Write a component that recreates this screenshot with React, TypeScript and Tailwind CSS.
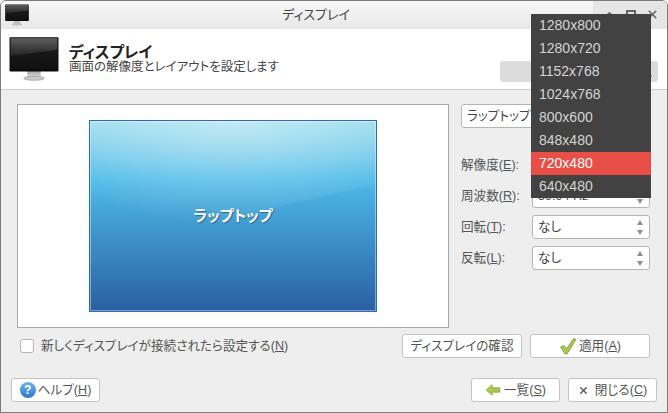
import React from 'react'
import { X, ChevronUp, ChevronRight } from 'lucide-react'

const FONT = "font-['Liberation_Sans','Noto_Sans_CJK_JP',sans-serif] [font-feature-settings:'palt']"

const MODES = ['1280x800', '1280x720', '1152x768', '1024x768', '800x600', '848x480', '720x480', '640x480']

function Monitor({ id, className }: { id: string; className: string }) {
  return (
    <svg viewBox="0 0 48 48" className={className}>
      <defs>
        <linearGradient id={id} x1="0" y1="0" x2="0" y2="1">
          <stop offset="0" stopColor="#5e5e5e" />
          <stop offset="0.5" stopColor="#2a2a2a" />
          <stop offset="1" stopColor="#0c0c0c" />
        </linearGradient>
        <linearGradient id={`${id}-s`} x1="0" y1="0" x2="0" y2="1">
          <stop offset="0" stopColor="#8d8d8d" />
          <stop offset="1" stopColor="#e4e4e4" />
        </linearGradient>
      </defs>
      <rect x="17.5" y="33" width="13" height="9" fill={`url(#${id}-s)`} />
      <ellipse cx="24" cy="42.5" rx="10" ry="2" fill="#c9c9c9" stroke="#8c8c8c" strokeWidth="0.5" />
      <rect x="0.5" y="3" width="47" height="33" rx="1" fill="#0a0a0a" />
      <rect x="1.5" y="4" width="45" height="30" fill={`url(#${id})`} />
      <path d="M1.5 21 L46.5 15 V34 H1.5 Z" fill="#111" opacity="0.75" />
    </svg>
  )
}

function Mnemonic({ before, k }: { before: string; k: string }) {
  return (
    <>
      {before}(<span className="underline">{k}</span>)
    </>
  )
}

function Spin({ value }: { value: string }) {
  return (
    <div className="flex h-[24px] w-[118px] items-center justify-between rounded-[3px] border border-[#b4b4b4] bg-white pl-[5px] pr-[6px] text-[#444]">
      <span>{value}</span>
      <div className="flex flex-col gap-[5px]">
        <div className="h-0 w-0 border-x-[3px] border-b-[5px] border-x-transparent border-b-[#8e8e8e]" />
        <div className="h-0 w-0 border-x-[3px] border-t-[5px] border-x-transparent border-t-[#8e8e8e]" />
      </div>
    </div>
  )
}

function Row({ label, k, value }: { label: string; k: string; value: string }) {
  return (
    <div className="flex items-center justify-between">
      <span className="whitespace-nowrap text-[#555]">
        <Mnemonic before={label} k={k} />:
      </span>
      <Spin value={value} />
    </div>
  )
}

function Btn({ className, children }: { className: string; children: React.ReactNode }) {
  return (
    <div
      className={`flex h-[24px] items-center justify-center whitespace-nowrap rounded-[3px] border border-[#c4c4c4] bg-white text-[#555] ${className}`}
    >
      {children}
    </div>
  )
}

export default function App() {
  return (
    <div className={`${FONT} relative flex h-[413px] w-[668px] flex-col overflow-hidden rounded-t-[6px] border border-[#7b7b7b] bg-[#eeeeee] text-[12.6px] leading-[16px]`}>
      {/* title bar */}
      <div className="relative flex h-[28px] shrink-0 items-center justify-center bg-gradient-to-b from-[#f7f7f7] to-[#e8e8e8] pr-[36px] text-[13px] text-[#444]">
        <Monitor id="mon-small" className="absolute left-[4px] top-[2px] h-[24px] w-[24px]" />
        <span>ディスプレイ</span>
        <div className="absolute bottom-0 right-0 top-0 w-[74px] bg-[#e6e6e6]" />
        <div className="absolute right-[8px] top-[7px] flex items-center gap-[10px] text-[#666]">
          <ChevronUp size={13} strokeWidth={3} />
          <div className="h-[10px] w-[10px] border-2 border-[#666]" />
          <X size={13} strokeWidth={3} />
        </div>
      </div>

      {/* header */}
      <div className="relative flex h-[61px] shrink-0 items-center gap-[10px] border-b border-[#cccccc] bg-white pl-[8px]">
        <Monitor id="mon-large" className="h-[50px] w-[50px]" />
        <div className="flex flex-col">
          <span className="text-[15.5px] font-bold leading-[16px] text-[#222]">ディスプレイ</span>
          <span className="text-[12.5px] leading-[13px] text-[#444]">画面の解像度とレイアウトを設定します</span>
        </div>
        <div className="absolute right-[9px] top-[32px] flex h-[21px] w-[158px] items-end justify-end rounded-[3px] bg-[#dcdcdc] text-[#666]">
          <ChevronRight size={6} strokeWidth={3} className="mb-[3px] mr-[4px]" />
        </div>
      </div>

      {/* body */}
      <div className="flex flex-1 flex-col px-[10px] pb-[10px] pt-[14px]">
        <div className="flex items-start pl-[6px]">
          <div className="flex h-[224px] w-[432px] shrink-0 items-center justify-center border border-[#a9a9a9] bg-white">
            <div className="relative flex h-[192px] w-[288px] items-center justify-center overflow-hidden border border-[#2d6cab] bg-gradient-to-b from-[#98dcec] via-[#4fbce9] via-30% to-[#2b5fa1] text-[15px] font-bold text-white">
              <svg viewBox="0 0 288 192" className="absolute inset-0 h-full w-full">
                <defs>
                  <radialGradient id="gloss" cx="0.5" cy="0" r="0.8">
                    <stop offset="0" stopColor="#fff" stopOpacity="0.42" />
                    <stop offset="1" stopColor="#fff" stopOpacity="0" />
                  </radialGradient>
                </defs>
                <path d="M0 130 L288 64 V0 H0 Z" fill="url(#gloss)" />
              </svg>
              <div className="absolute inset-0 border border-white/40" />
              <span className="relative [text-shadow:1px_1px_1px_#33669a]">ラップトップ</span>
            </div>
          </div>

          <div className="flex w-[201px] shrink-0 flex-col pl-[12px]">
            <div className="flex h-[24px] w-[100px] items-center rounded-[3px] border border-[#b4b4b4] bg-white pl-[5px] text-[#444]">
              ラップトップ
            </div>
            <div className="mt-[25px] flex flex-col gap-[7px]">
              <Row label="解像度" k="E" value="720x480" />
              <Row label="周波数" k="R" value="59.94 Hz" />
              <Row label="回転" k="T" value="なし" />
              <Row label="反転" k="L" value="なし" />
            </div>
          </div>
        </div>

        <div className="mt-[6px] flex items-center pl-[9px]">
          <div className="h-[14px] w-[14px] rounded-[3px] border border-[#b4b4b4] bg-white" />
          <span className="ml-[7px] whitespace-nowrap text-[#555]">
            <Mnemonic before="新しくディスプレイが接続されたら設定する" k="N" />
          </span>
          <Btn className="ml-auto w-[120px]">ディスプレイの確認</Btn>
          <Btn className="ml-[8px] mr-[7px] w-[120px] gap-[2px]">
            <svg viewBox="0 0 18 18" className="h-[18px] w-[18px]">
              <path d="M1.5 10 L5 8.5 L7.5 12 L14.5 1.5 L17 2.5 L8 17 L6 17 Z" fill="#a8c84e" stroke="#6f8f2c" strokeWidth="0.7" />
            </svg>
            <span>
              <Mnemonic before="適用" k="A" />
            </span>
          </Btn>
        </div>

        <div className="mt-auto flex items-center">
          <Btn className="w-[89px] gap-[2px]">
            <div className="flex h-[16px] w-[16px] items-center justify-center rounded-full bg-gradient-to-b from-[#6fb2ea] to-[#2a7cc9] text-[12px] font-bold text-white">?</div>
            <span>
              <Mnemonic before="ヘルプ" k="H" />
            </span>
          </Btn>
          <Btn className="ml-auto w-[89px] gap-[3px]">
            <svg viewBox="0 0 18 14" className="h-[12px] w-[16px]">
              <path d="M1 7 L8 1 V4.5 H17 V9.5 H8 V13 Z" fill="#a9c94f" stroke="#7c9a30" strokeWidth="0.8" />
            </svg>
            <span>
              <Mnemonic before="一覧" k="S" />
            </span>
          </Btn>
          <Btn className="ml-[8px] w-[89px] gap-[6px]">
            <X size={11} strokeWidth={3} className="text-[#555]" />
            <span>
              <Mnemonic before="閉じる" k="C" />
            </span>
          </Btn>
        </div>
      </div>

      {/* open resolution menu */}
      <div className="absolute left-[530px] top-[13px] flex w-[120px] flex-col bg-[#424242] text-[14px] text-[#d4d4d4]">
        {MODES.map(mode => (
          <div
            key={mode}
            className={`flex h-[23px] items-center pb-[2px] pl-[8px] ${mode === '720x480' ? 'bg-[#e84f46] text-white' : ''}`}
          >
            {mode}
          </div>
        ))}
      </div>
    </div>
  )
}
